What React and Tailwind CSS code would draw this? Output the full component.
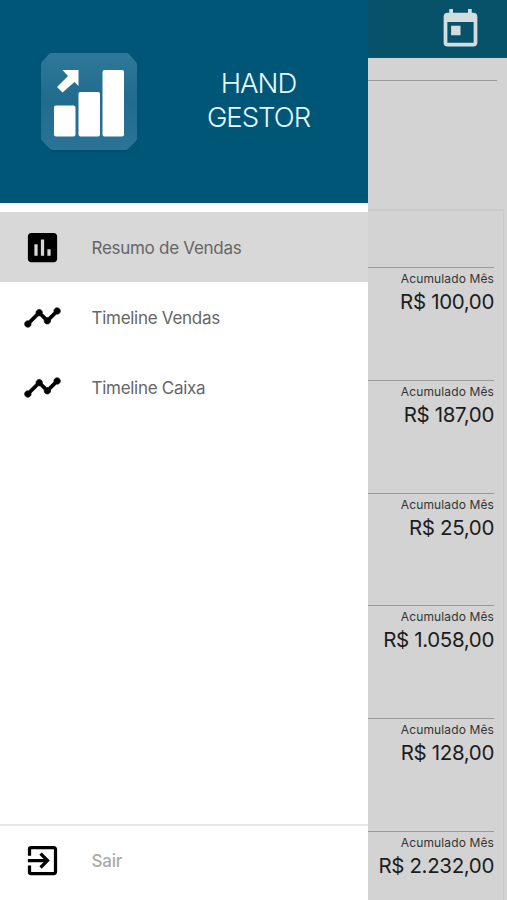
import { MdExitToApp, MdInsertChart, MdTimeline, MdToday } from 'react-icons/md';

const menuItems = [
  { label: 'Resumo de Vendas', icon: MdInsertChart, active: true },
  { label: 'Timeline Vendas', icon: MdTimeline },
  { label: 'Timeline Caixa', icon: MdTimeline },
];

const totals = ['100,00', '187,00', '25,00', '1.058,00', '128,00', '2.232,00'];

function Logo() {
  return (
    <svg className="h-[104px] w-[100px] shrink-0" viewBox="0 0 100 104" aria-hidden>
      <defs>
        <linearGradient id="tile" x1="0" y1="0" x2="0" y2="1">
          <stop offset="0" stopColor="#2f7899" />
          <stop offset="0.5" stopColor="#206b8e" />
          <stop offset="1" stopColor="#2b7497" />
        </linearGradient>
      </defs>
      <path d="M13 4h74l11 11v75l-11 11H13L2 90V15z" fill="#004b67" opacity="0.6" />
      <path d="M12 2h75q2 0 3 1l7 8q1 1 1 3v73q0 2-1 3l-8 8q-1 1-3 1H14q-2 0-3-1l-8-8q-1-1-1-3V14q0-2 1-3l7-8q1-1 2-1z" fill="url(#tile)" />
      <rect x="15" y="54.500" width="21.500" height="31" rx="2" fill="#fff" />
      <rect x="39.500" y="41" width="21.500" height="44.500" rx="2" fill="#fff" />
      <rect x="63.500" y="19" width="21.500" height="66.500" rx="2" fill="#fff" />
      <path d="M23.500 19h16v16l-4-4-12 10.500-5.500-5.500 11-11z" fill="#fff" />
    </svg>
  );
}

function Drawer() {
  return (
    <aside className="flex w-[368px] shrink-0 flex-col bg-white">
      <header className="flex h-[203px] items-start bg-[#005676] pt-[51px] pl-[39px]">
        <Logo />
        <h1 className="mt-[15px] ml-[59.5px] w-[120px] text-center text-[27.5px] leading-[34px] font-light tracking-[-1px] text-[#e8f8ff]">
          HAND GESTOR
        </h1>
      </header>
      <nav className="mt-[9px] flex flex-1 flex-col">
        {menuItems.map(({ label, icon: Icon, active }) => (
          <a
            key={label}
            className={`flex h-[70px] items-center pl-[23px] ${active ? 'bg-[#d8d8d8]' : ''}`}
          >
            <Icon
              className={`size-[39px] text-black ${active ? '' : '[&>path:last-child]:stroke-[0.4]'}`}
              aria-hidden
            />
            <span className="mt-[3px] ml-[29.5px] text-[17px] tracking-[-0.28px] text-[#666]">{label}</span>
          </a>
        ))}
      </nav>
      <a className="flex h-[76px] items-center border-t-2 border-[#e6e6e6] pb-[6px] pl-[23px]">
        <MdExitToApp className="size-[39px] text-black" aria-hidden />
        <span className="mt-[3px] ml-[29.5px] text-[17px] font-medium tracking-[-0.2px] text-[#aaa]">Sair</span>
      </a>
    </aside>
  );
}

function Summary() {
  return (
    <main className="flex min-w-0 flex-1 flex-col bg-[#d3d3d3]">
      <div className="flex h-[58px] shrink-0 items-start justify-end bg-[#075269] pt-[7px] pr-[24px]">
        <MdToday className="size-[45px] text-[#d3dde0]" aria-hidden />
      </div>
      <div className="mr-[10px] h-[23px] shrink-0 border-b border-[#999]" />
      <div className="h-[128px] shrink-0" />
      <div className="mr-[3px] flex-1 border-t-2 border-r border-[#cacaca] pt-[56px] pr-[9px]">
        {totals.map((value) => (
          <div
            key={value}
            className="h-[112.8px] border-t border-[#999] pt-[2px] text-right whitespace-nowrap"
          >
            <p className="text-[12px] leading-[18px] tracking-[0.12px] text-[#333]">Acumulado Mês</p>
            <p className="text-[20.5px] leading-[28px] tracking-[-0.35px] text-[#1c1c1c]">R$ {value}</p>
          </div>
        ))}
      </div>
    </main>
  );
}

export default function App() {
  return (
    <div className="flex h-[900px] w-[507px] overflow-hidden font-['Inter',sans-serif]">
      <Drawer />
      <Summary />
    </div>
  );
}
